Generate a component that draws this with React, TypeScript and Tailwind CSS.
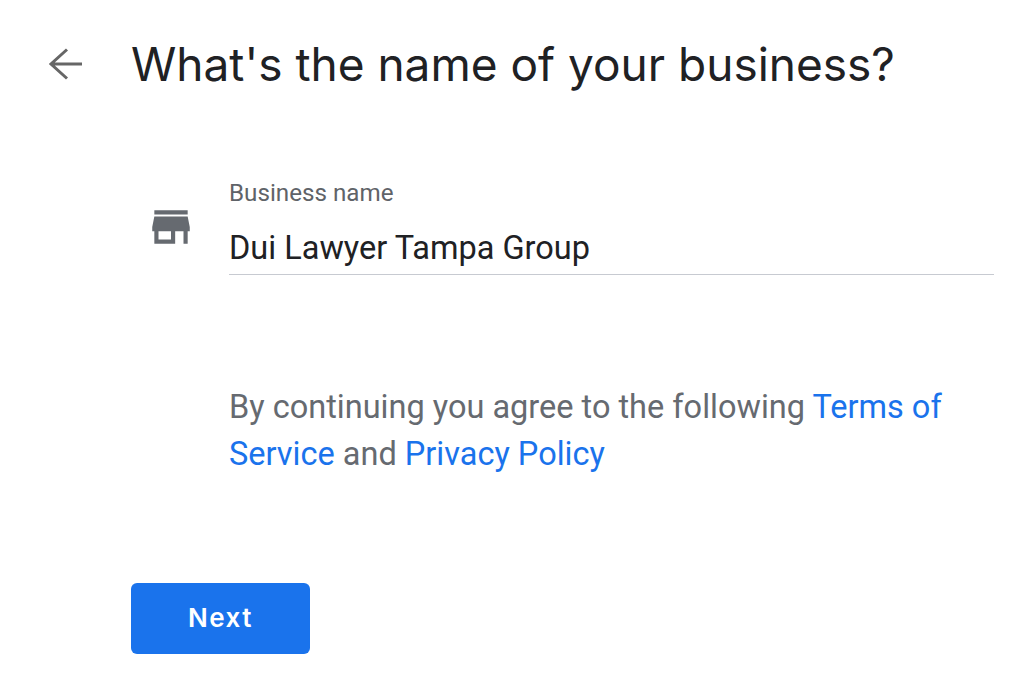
export default function App() {
  return (
    <div className="min-h-[690px] w-[1024px] overflow-hidden bg-white font-['Roboto',sans-serif]">
      <div className="flex items-center pl-[42px] pt-[34px]">
        <button className="flex w-[89px] items-center text-[#666666]">
          <svg width="48" height="48" viewBox="0 0 48 48" fill="none" stroke="currentColor" strokeWidth="3">
            <path d="M40 24H9M25 9.5 9 24l16 14.5" />
          </svg>
        </button>
        <h1 className="whitespace-nowrap font-['Inter',sans-serif] text-[46px] leading-[60px] text-[#202124]">What's the name of your business?</h1>
      </div>

      <div className="ml-[131px] mt-[85px]">
        <div className="flex">
          <div className="w-[98px] pl-[15px] pt-[23px] text-[#666a70]">
            <svg width="50" height="50" viewBox="0 0 24 24" fill="currentColor">
              <path d="M20 4H4v2h16V4zm1 10v-2l-1-5H4l-1 5v2h1v6h10v-6h4v6h2v-6h1zm-9 4H6v-4h6v4z" />
            </svg>
          </div>
          <div className="w-[765px] border-b border-[#c7cad1] pb-[6px]">
            <div className="text-[24.2px] leading-[28px] text-[#5f6368]">Business name</div>
            <div className="mt-[21px] text-[32.5px] leading-[40px] text-[#202124]">Dui Lawyer Tampa Group</div>
          </div>
        </div>

        <p className="ml-[98px] mt-[109px] w-[740px] text-[32.5px] leading-[47px] text-[#666a70]">
          By continuing you agree to the following <a className="text-[#1a73ec]">Terms of Service</a> and <a className="text-[#1a73ec]">Privacy Policy</a>
        </p>

        <button className="mt-[105px] h-[71px] w-[179px] rounded-[6px] bg-[#1a73ec] pb-[2px] font-['Inter',sans-serif] text-[26px] font-semibold tracking-[1.5px] text-white">
          Next
        </button>
      </div>
    </div>
  );
}
